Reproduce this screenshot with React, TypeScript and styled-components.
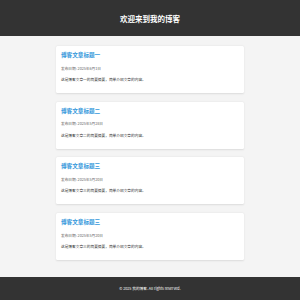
import React from 'react';
import styled, { createGlobalStyle } from 'styled-components';

const GlobalStyle = createGlobalStyle`
  html, body {
    margin: 0;
    padding: 0;
    background: #f4f4f4;
    font-family: "Noto Sans CJK SC", "Noto Sans", sans-serif;
  }
`;

const Page = styled.div`
  display: flex;
  flex-direction: column;
  min-height: 300px;
`;

const Header = styled.header`
  background: #333;
  color: #fff;
  height: 36px;
  display: flex;
  align-items: center;
  justify-content: center;
`;

const SiteTitle = styled.h1`
  margin: 0;
  font-size: 7.5px;
  font-weight: 700;
`;

const Main = styled.main`
  flex: 1;
  width: 188px;
  margin: 0 auto;
  padding: 10px 0 16px;
  display: flex;
  flex-direction: column;
  gap: 8.7px;
`;

const Card = styled.article`
  background: #fff;
  border-radius: 1.5px;
  box-shadow: 0 0.5px 2px rgba(0, 0, 0, 0.1);
  height: 47px;
  box-sizing: border-box;
  padding: 6px 5px 0;
`;

const CardTitle = styled.h2`
  margin: 0 0 6px;
  font-size: 5.6px;
  line-height: 7.5px;
  font-weight: 700;
  color: #3498db;
`;

const Meta = styled.p`
  margin: 0 0 6.5px;
  font-size: 3.7px;
  line-height: 5px;
  color: #666;
`;

const Summary = styled.p`
  margin: 0;
  font-size: 3.7px;
  line-height: 5px;
  color: #333;
`;

const Footer = styled.footer`
  background: #333;
  color: #fff;
  height: 23px;
  display: flex;
  align-items: center;
  justify-content: center;
  font-size: 3.7px;
`;

const posts = [
  { title: '博客文章标题一', date: '2025年6月1日', summary: '这是博客文章一的简要摘要，简单介绍文章的内容。' },
  { title: '博客文章标题二', date: '2025年5月28日', summary: '这是博客文章二的简要摘要，简单介绍文章的内容。' },
  { title: '博客文章标题三', date: '2025年5月20日', summary: '这是博客文章三的简要摘要，简单介绍文章的内容。' },
  { title: '博客文章标题三', date: '2025年5月20日', summary: '这是博客文章三的简要摘要，简单介绍文章的内容。' },
];

export default function App() {
  return (
    <Page>
      <GlobalStyle />
      <Header>
        <SiteTitle>欢迎来到我的博客</SiteTitle>
      </Header>
      <Main>
        {posts.map((p, i) => (
          <Card key={i}>
            <CardTitle>{p.title}</CardTitle>
            <Meta>发布日期: {p.date}</Meta>
            <Summary>{p.summary}</Summary>
          </Card>
        ))}
      </Main>
      <Footer>© 2025 我的博客. All rights reserved.</Footer>
    </Page>
  );
}
